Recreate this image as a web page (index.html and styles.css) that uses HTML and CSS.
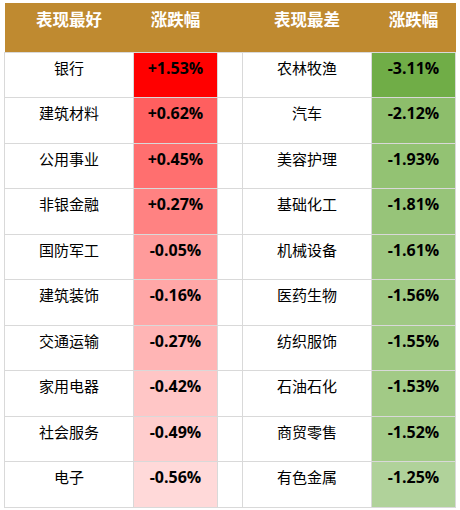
FILE: index.html
```html
<!DOCTYPE html>
<html lang="zh-CN">
<head>
    <meta charset="UTF-8">
    <title>行业涨跌幅</title>
    <link rel="stylesheet" href="styles.css">
</head>
<body>
    <table class="rank">
        <colgroup>
            <col class="c-name">
            <col class="c-pct">
            <col class="c-gap">
            <col class="c-name">
            <col class="c-pct">
        </colgroup>
        <thead>
            <tr>
                <th>表现最好</th>
                <th>涨跌幅</th>
                <th></th>
                <th>表现最差</th>
                <th>涨跌幅</th>
            </tr>
        </thead>
        <tbody>
            <tr><td>银行</td><td class="pct up1">+1.53%</td><td></td><td>农林牧渔</td><td class="pct dn1">-3.11%</td></tr>
            <tr><td>建筑材料</td><td class="pct up2">+0.62%</td><td></td><td>汽车</td><td class="pct dn2">-2.12%</td></tr>
            <tr><td>公用事业</td><td class="pct up3">+0.45%</td><td></td><td>美容护理</td><td class="pct dn3">-1.93%</td></tr>
            <tr><td>非银金融</td><td class="pct up4">+0.27%</td><td></td><td>基础化工</td><td class="pct dn4">-1.81%</td></tr>
            <tr><td>国防军工</td><td class="pct up5">-0.05%</td><td></td><td>机械设备</td><td class="pct dn5">-1.61%</td></tr>
            <tr><td>建筑装饰</td><td class="pct up6">-0.16%</td><td></td><td>医药生物</td><td class="pct dn6">-1.56%</td></tr>
            <tr><td>交通运输</td><td class="pct up7">-0.27%</td><td></td><td>纺织服饰</td><td class="pct dn7">-1.55%</td></tr>
            <tr><td>家用电器</td><td class="pct up8">-0.42%</td><td></td><td>石油石化</td><td class="pct dn8">-1.53%</td></tr>
            <tr><td>社会服务</td><td class="pct up9">-0.49%</td><td></td><td>商贸零售</td><td class="pct dn9">-1.52%</td></tr>
            <tr><td>电子</td><td class="pct up10">-0.56%</td><td></td><td>有色金属</td><td class="pct dn10">-1.25%</td></tr>
        </tbody>
    </table>
</body>
</html>
```

FILE: styles.css
```css
* {
    margin: 0;
    padding: 0;
    box-sizing: border-box;
}

body {
    background: #fff;
    padding: 3px 0 0 4px;
    font-family: "Noto Sans CJK SC", "Noto Sans", sans-serif;
    color: #000;
}

.rank {
    border-collapse: collapse;
    table-layout: fixed;
    width: 452px;
}

.c-name { width: 129px; }
.c-pct { width: 84px; }
.c-gap { width: 25px; }

.rank th {
    background: #bf8a30;
    color: #fff;
    font-size: 16.5px;
    font-weight: bold;
    height: 49px;
    vertical-align: top;
    padding-top: 4px;
    line-height: 24px;
}

.rank td {
    height: 45.5px;
    border: 1px solid #d9d9d9;
    text-align: center;
    vertical-align: top;
    padding-top: 4px;
    font-size: 15px;
    line-height: 22px;
}

.rank td.pct {
    font-family: "Open Sans", "Noto Sans", sans-serif;
    font-weight: bold;
    font-size: 16px;
}

.up1 { background: #ff0000; }
.up2 { background: #ff5f5f; }
.up3 { background: #ff6f6f; }
.up4 { background: #ff8282; }
.up5 { background: #ff9b9b; }
.up6 { background: #ffa7a7; }
.up7 { background: #ffb5b5; }
.up8 { background: #ffc6c6; }
.up9 { background: #ffcdcd; }
.up10 { background: #ffd9d9; }

.dn1 { background: #70ad47; }
.dn2 { background: #8dbe6b; }
.dn3 { background: #93c273; }
.dn4 { background: #97c479; }
.dn5 { background: #9dc780; }
.dn6 { background: #a0c984; }
.dn7 { background: #a1ca85; }
.dn8 { background: #a2ca86; }
.dn9 { background: #a3cb88; }
.dn10 { background: #b0d29a; }
```
